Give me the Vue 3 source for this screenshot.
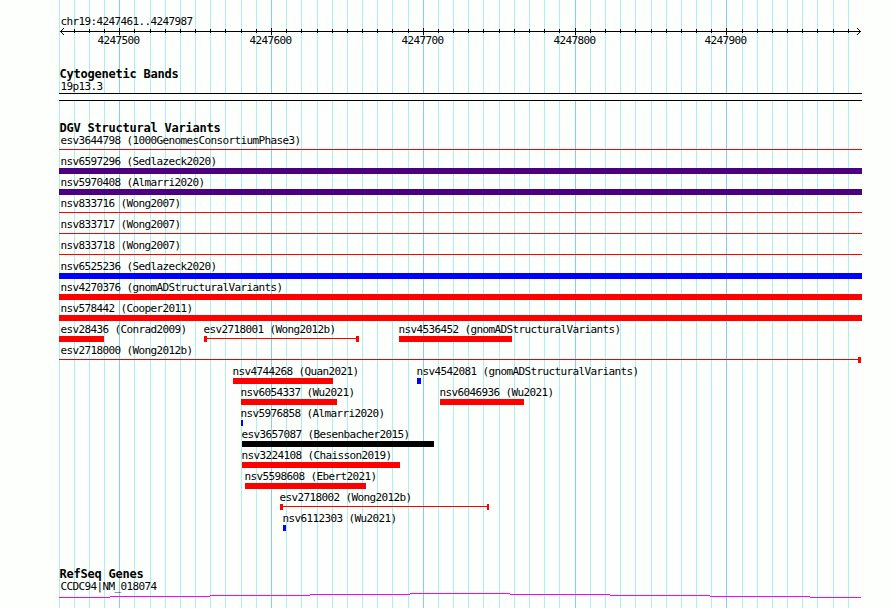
<template>
  <div class="browser">
    <svg class="grid" width="890" height="608" shape-rendering="crispEdges">
      <rect
        v-for="line in gridLines"
        :key="line.x"
        :x="line.x"
        y="0"
        width="1"
        height="608"
        :class="line.major ? 'grid-major' : 'grid-minor'"
      />
    </svg>

    <header class="ruler">
      <div class="label ruler-title">chr19:4247461..4247987</div>
      <svg class="ruler-axis" width="890" height="9" shape-rendering="crispEdges">
        <rect x="60" y="4" width="801" height="1" />
        <rect
          v-for="line in ticks"
          :key="line.x"
          :x="line.x"
          :y="line.major ? 1 : 2"
          width="1"
          :height="line.major ? 7 : 4"
        />
        <path d="M61 3h1v1h-1zM62 2h1v1h-1zM63 1h1v1h-1zM61 5h1v1h-1zM62 6h1v1h-1zM63 7h1v1h-1z" />
        <path d="M859 3h1v1h-1zM858 2h1v1h-1zM857 1h1v1h-1zM859 5h1v1h-1zM858 6h1v1h-1zM857 7h1v1h-1z" />
      </svg>
      <div class="ruler-numbers">
        <span
          v-for="line in majorLines"
          :key="line.x"
          class="label ruler-number"
          :style="{ left: line.x - 22 + 'px' }"
        >{{ line.position }}</span>
      </div>
    </header>

    <section class="track cytobands">
      <h2>Cytogenetic Bands</h2>
      <div class="label track-label">19p13.3</div>
      <div class="band"></div>
    </section>

    <section class="track variants">
      <h2>DGV Structural Variants</h2>
      <div v-for="(row, i) in rows" :key="i" class="row">
        <div
          v-for="v in row"
          :key="v.name"
          class="feature"
          :style="{ left: v.start + 'px', width: v.end - v.start + 'px' }"
        >
          <div class="label" :class="{ 'at-edge': v.start === 59 }">{{ v.name }}</div>
          <div class="glyph" :class="[v.type, v.color]"></div>
        </div>
      </div>
    </section>

    <section class="track genes">
      <h2>RefSeq Genes</h2>
      <div class="label track-label">CCDC94|NM_018074</div>
      <svg class="gene" width="890" height="5" shape-rendering="crispEdges">
        <rect
          v-for="part in genePath"
          :key="part.x"
          :x="part.x"
          :y="part.y"
          :width="part.w"
          height="1"
        />
      </svg>
    </section>
  </div>
</template>

<script setup>
// a line every 10 bp (15px), pushed one pixel further at each of these indexes
const hops = [6, 12, 17, 23, 29, 34, 39, 45, 51];

const gridLines = Array.from({ length: 53 }, (_, k) => ({
  x: 59 + 15 * k + hops.filter((h) => h <= k).length,
  major: k % 10 === 4,
  position: 4247460 + k * 10,
}));
const ticks = gridLines.slice(1);
const majorLines = gridLines.filter((line) => line.major);

const feature = (name, start, end, color, type = 'bar') => ({ name, start, end, color, type });

const rows = [
  [feature('esv3644798 (1000GenomesConsortiumPhase3)', 59, 862, 'red', 'line')],
  [feature('nsv6597296 (Sedlazeck2020)', 59, 862, 'indigo')],
  [feature('nsv5970408 (Almarri2020)', 59, 862, 'indigo')],
  [feature('nsv833716 (Wong2007)', 59, 862, 'red', 'line')],
  [feature('nsv833717 (Wong2007)', 59, 862, 'red', 'line')],
  [feature('nsv833718 (Wong2007)', 59, 862, 'red', 'line')],
  [feature('nsv6525236 (Sedlazeck2020)', 59, 862, 'blue')],
  [feature('nsv4270376 (gnomADStructuralVariants)', 59, 862, 'red')],
  [feature('nsv578442 (Cooper2011)', 59, 862, 'red')],
  [
    feature('esv28436 (Conrad2009)', 59, 104, 'red'),
    feature('esv2718001 (Wong2012b)', 204, 359, 'red', 'range'),
    feature('nsv4536452 (gnomADStructuralVariants)', 399, 512, 'red'),
  ],
  [feature('esv2718000 (Wong2012b)', 59, 861, 'crimson', 'range open-start')],
  [
    feature('nsv4744268 (Quan2021)', 233, 333, 'red'),
    feature('nsv4542081 (gnomADStructuralVariants)', 417, 421, 'blue'),
  ],
  [
    feature('nsv6054337 (Wu2021)', 241, 337, 'red'),
    feature('nsv6046936 (Wu2021)', 440, 524, 'red'),
  ],
  [feature('nsv5976858 (Almarri2020)', 241, 243, 'blue')],
  [feature('esv3657087 (Besenbacher2015)', 242, 434, 'black')],
  [feature('nsv3224108 (Chaisson2019)', 242, 400, 'red')],
  [feature('nsv5598608 (Ebert2021)', 245, 366, 'red')],
  [feature('esv2718002 (Wong2012b)', 280, 489, 'red', 'range short-end')],
  [feature('nsv6112303 (Wu2021)', 283, 286, 'blue')],
];

const genePath = [
  { x: 59, y: 4, w: 51 },
  { x: 110, y: 3, w: 100 },
  { x: 210, y: 2, w: 100 },
  { x: 310, y: 1, w: 100 },
  { x: 410, y: 0, w: 100 },
  { x: 510, y: 1, w: 100 },
  { x: 610, y: 2, w: 100 },
  { x: 710, y: 3, w: 100 },
  { x: 810, y: 4, w: 51 },
];
</script>

<style>
body {
  background: #fdfffc;
}
</style>

<style scoped>
.browser {
  position: relative;
  width: 890px;
  height: 608px;
  overflow: hidden;
  color: #000;
  background: #fdfffc;
}

.grid {
  position: absolute;
  top: 0;
  left: 0;
}

.grid-minor {
  fill: #afeeee;
}

.grid-major {
  fill: #87ceeb;
}

.label {
  height: 15px;
  font: 11px/17px "DejaVu Sans Mono", monospace;
  letter-spacing: -0.622px;
  text-indent: 0.5px;
  white-space: nowrap;
}

h2 {
  margin: 0;
  padding-left: 59px;
  height: 12px;
  font: bold 12px/16px "DejaVu Sans Mono", monospace;
  letter-spacing: -0.224px;
  text-indent: 0.4px;
  white-space: nowrap;
}

.ruler {
  position: relative;
  height: 66px;
  padding-top: 13px;
  box-sizing: border-box;
}

.ruler-title {
  height: 14px;
  padding-left: 60px;
}

.ruler-axis {
  display: block;
}

.ruler-numbers {
  position: relative;
  margin-top: -4px;
}

.ruler-number {
  position: absolute;
  top: 0;
}

.track {
  position: relative;
}

.track-label {
  padding-left: 60px;
}

.cytobands {
  height: 54px;
}

.band {
  width: 803px;
  height: 8px;
  margin-left: 59px;
  box-sizing: border-box;
  border: solid #000;
  border-width: 1px 0;
  background: #fdfffc;
}

.variants {
  height: 446px;
}

.row {
  position: relative;
  height: 21px;
}

.feature {
  position: absolute;
  top: 0;
}

.feature .label {
  margin-left: -1px;
}

.feature .at-edge {
  margin-left: 1px;
}

.glyph {
  height: 6px;
}

.red {
  --color: #ff0000;
}

.crimson {
  --color: #e8000c;
}

.indigo {
  --color: #4b0082;
}

.blue {
  --color: #0000ff;
}

.black {
  --color: #000000;
}

.bar {
  background: var(--color);
}

.line,
.range {
  background: linear-gradient(var(--color), var(--color)) 0 2px / 100% 1px no-repeat;
}

.range {
  box-sizing: border-box;
  border: solid #ff0000;
  border-width: 0 3px;
}

.open-start {
  border-left-width: 0;
}

.short-end {
  border-right-width: 2px;
}

.gene {
  display: block;
  fill: #ff00ff;
}
</style>
